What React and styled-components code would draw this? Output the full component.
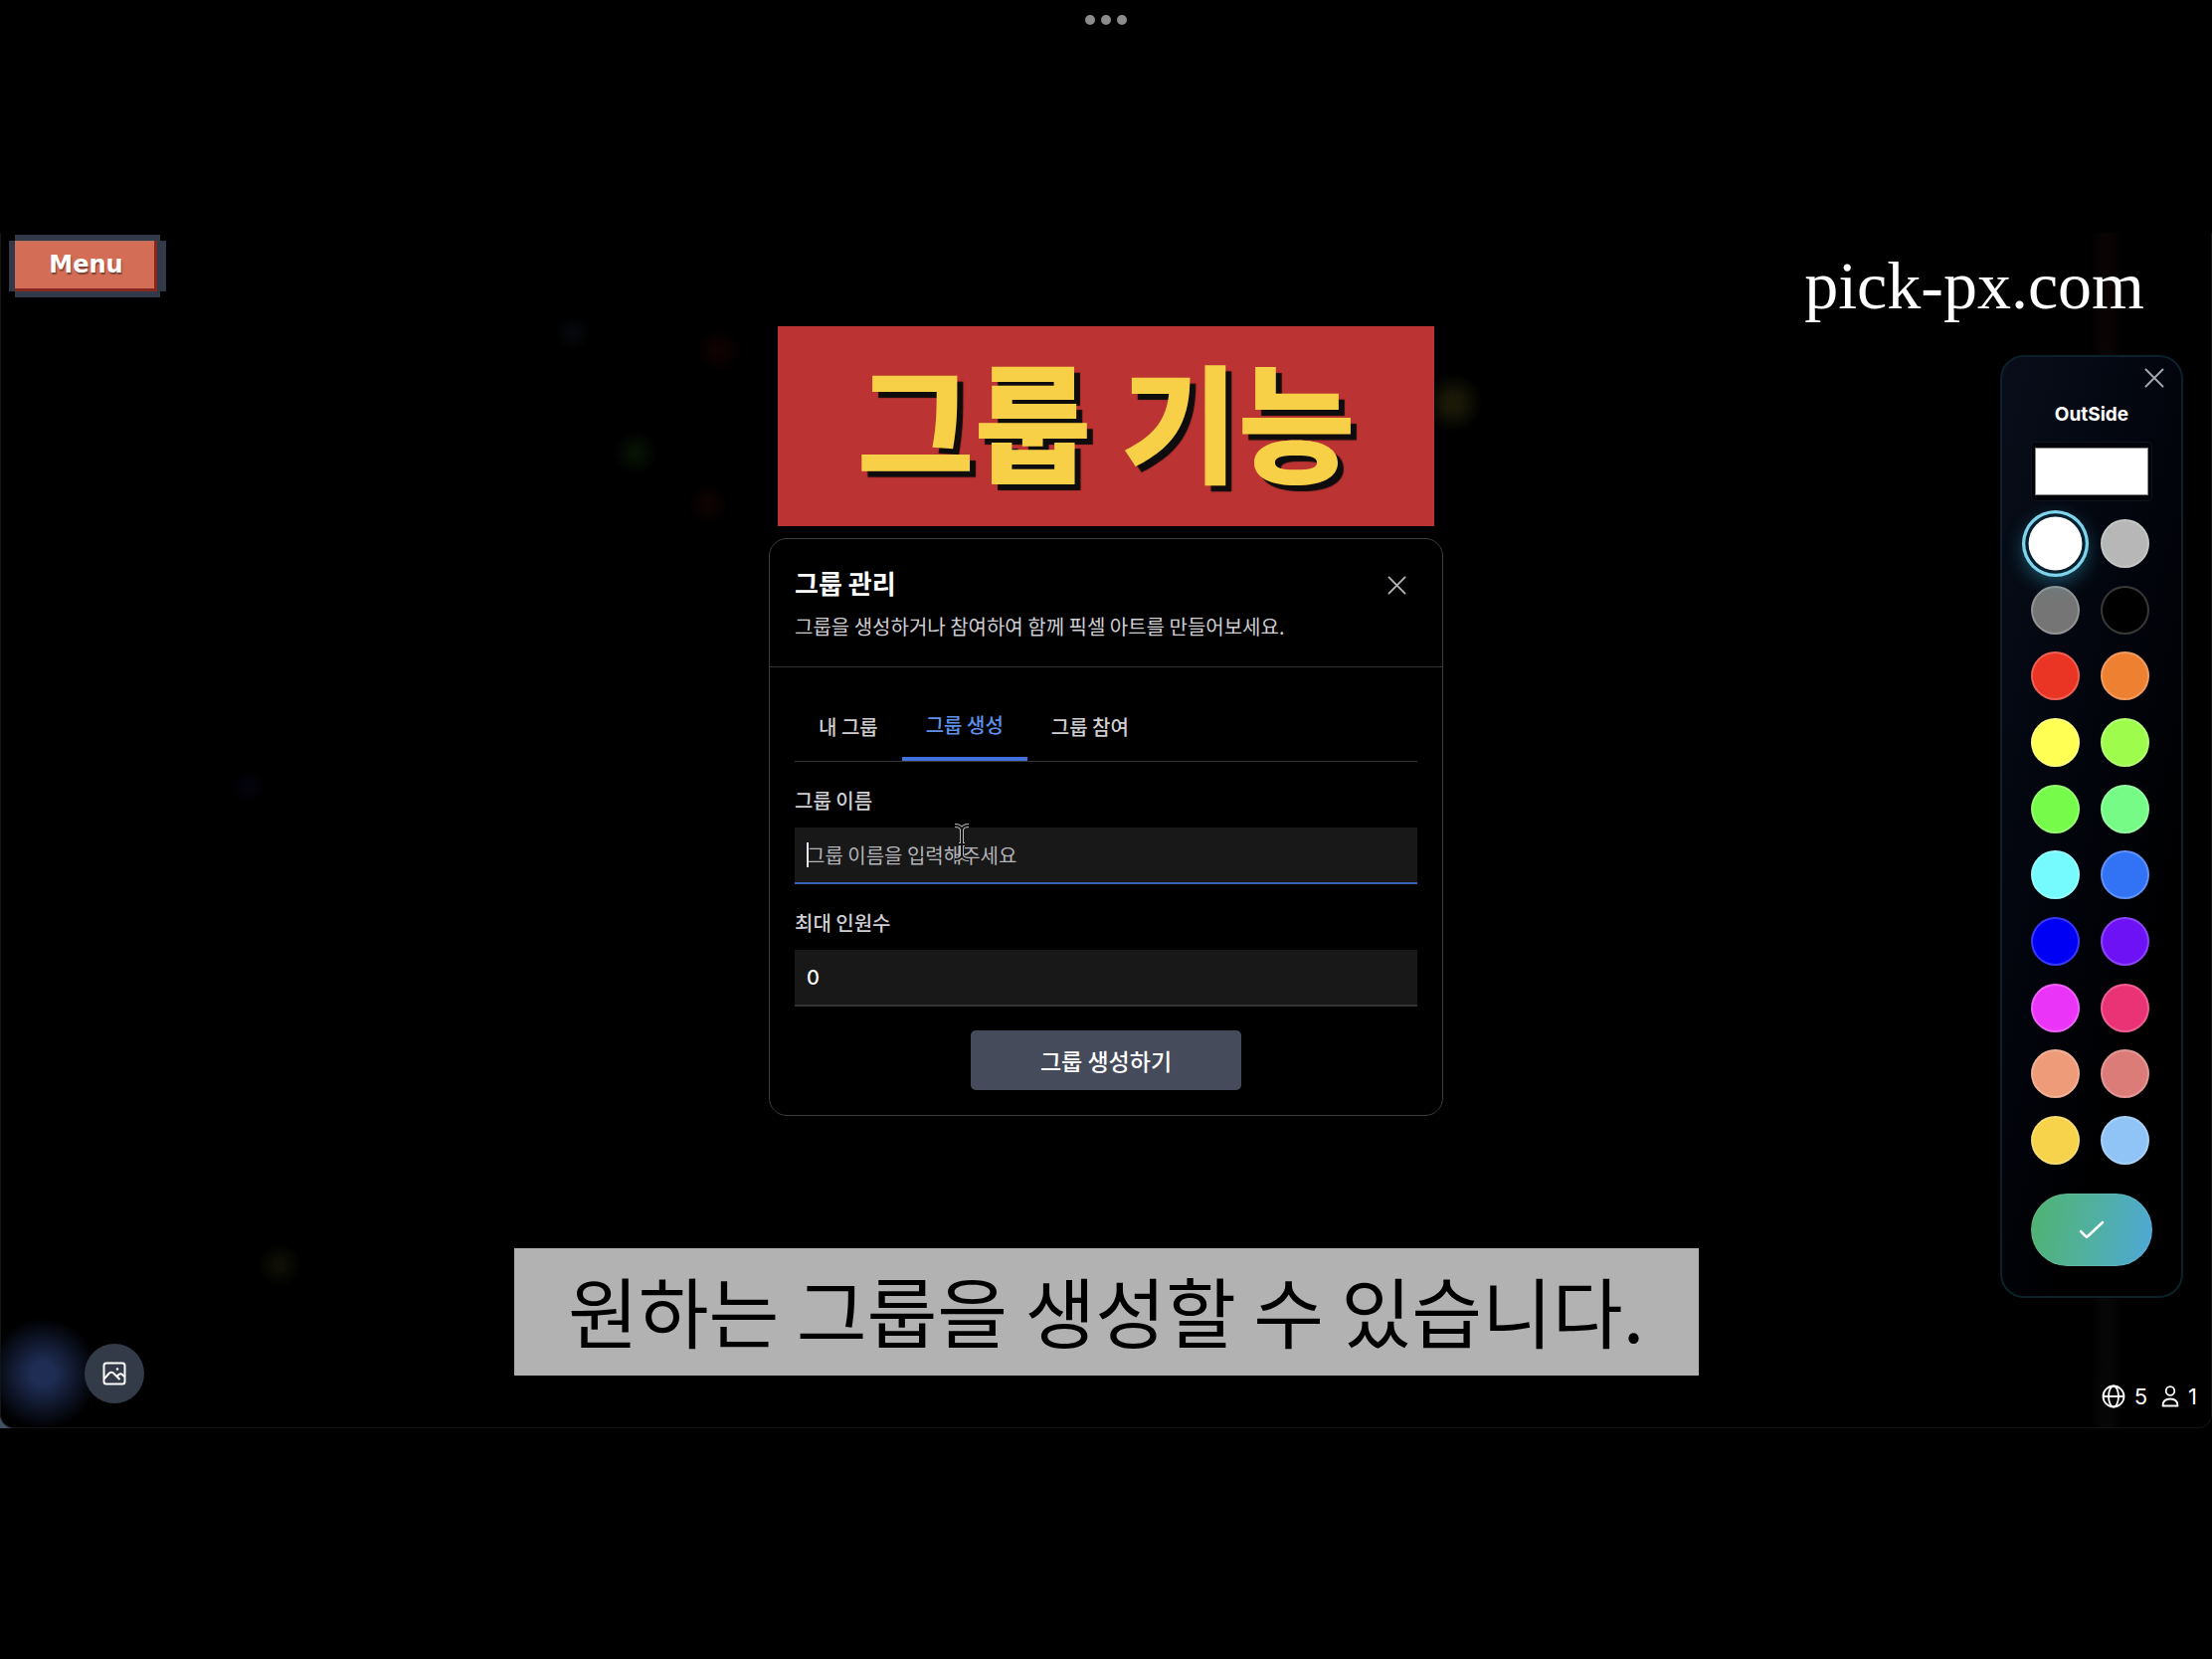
import React, { useState } from "react";
import styled, { createGlobalStyle } from "styled-components";

const GlobalStyle = createGlobalStyle`
  * { box-sizing: border-box; }
  body {
    margin: 0;
    background: #000;
    color: #fff;
    font-family: Inter, "Noto Sans CJK KR", sans-serif;
  }
  button, input { font-family: inherit; }
`;

const Page = styled.div`
  min-height: 100vh;
  display: flex;
  flex-direction: column;
`;

const TopBar = styled.header`
  height: 234px;
  padding-top: 15px;
  display: flex;
  justify-content: center;
  gap: 6px;
`;

const Dot = styled.span`
  width: 10px;
  height: 10px;
  border-radius: 50%;
  background: #8c8c8c;
`;

const Backdrop = styled.div`
  background: linear-gradient(to top, #405263 0, #405263 20px, transparent 20px) left / 20px 100% no-repeat;
`;

const Stage = styled.main`
  position: relative;
  isolation: isolate;
  overflow: hidden;
  display: grid;
  grid-template-columns: 1fr auto 1fr;
  background: #000;
  border: 1px solid #141414;
  border-top: 0;
  border-radius: 0 0 14px 14px;
`;

const Glow = styled.span`
  position: absolute;
  z-index: -1;
  left: ${(p) => p.$x}%;
  top: ${(p) => p.$y}%;
  width: ${(p) => p.$size}px;
  height: ${(p) => p.$size}px;
  transform: translate(-50%, -50%);
  border-radius: 50%;
  background: radial-gradient(circle, ${(p) => p.$color} 0%, ${(p) => p.$color} 15%, transparent 70%);
`;

const Streak = styled.span`
  position: absolute;
  z-index: -1;
  right: 4%;
  top: 0;
  bottom: 0;
  width: 32px;
  background: linear-gradient(90deg, #000, transparent 40%, transparent 60%, #000),
    linear-gradient(#0a0304, #080405 50%, #070707);
`;

const Column = styled.div`
  display: flex;
  flex-direction: column;
  align-items: ${(p) => p.$align};
`;

const LeftColumn = styled(Column)`
  justify-content: space-between;
  padding: 8px 8px 24px;
`;

const MenuButton = styled.button`
  margin: 0 6px;
  height: 48px;
  width: 143px;
  padding: 0;
  border: 0;
  background: #d46d55;
  box-shadow: inset -3px 0 #84271f, inset 0 1px #b5745f, 0 3px #84271f, 3px 0 #323a49, 3px -6px #323a49,
    0 -6px #323a49, 3px 9px #323a49, 0 9px #323a49, -6px 0 #323a49, 9px 3px #323a49, -6px 3px #323a49, 9px 0 #323a49;
  color: #fff;
  font: bold 24px/40px "DejaVu Sans", sans-serif;
  text-shadow: 1px 2px 1px #7d4338;
`;

const GalleryButton = styled.button`
  width: 60px;
  height: 60px;
  margin-left: 76px;
  padding: 0;
  display: grid;
  place-items: center;
  border: 0;
  border-radius: 50%;
  background: #333a48;
  color: #fff;
`;

const CenterColumn = styled(Column)`
  padding: 94px 0 52px;
`;

const Banner = styled.h1`
  width: 660px;
  margin: 0 0 12px;
  padding: 0 0 16px;
  background: #bb3332;
  color: #f7d047;
  font: 900 128px/185px "Noto Sans CJK KR", sans-serif;
  text-align: center;
  text-shadow: 6px 6px 1px #0e0c0c;
`;

const Dialog = styled.section`
  width: 678px;
  border: 1px solid #3c3c3c;
  border-radius: 18px;
  background: #000;
  font-family: "Noto Sans CJK KR", sans-serif;
`;

const DialogHead = styled.header`
  display: flex;
  justify-content: space-between;
  align-items: flex-start;
  padding: 26px 25px 24px;
  border-bottom: 1px solid #333;
`;

const DialogTitle = styled.h2`
  margin: 0 0 10px;
  font-size: 26px;
  line-height: 36px;
  font-weight: 700;
`;

const DialogText = styled.p`
  margin: 0;
  color: #cfcfd4;
  font-size: 20px;
  line-height: 32px;
`;

const CloseButton = styled.button`
  padding: 11px;
  display: grid;
  border: 0;
  background: none;
  color: #b4b4b8;
`;

const DialogBody = styled.div`
  padding: 24px 25px 25px;
`;

const Tabs = styled.div`
  display: flex;
  border-bottom: 1px solid #333;
`;

const Tab = styled.button`
  height: 70px;
  padding: 0 24px;
  border: 0;
  border-bottom: ${(p) => (p.$active ? "4px solid #4271dc" : "0")};
  background: none;
  color: ${(p) => (p.$active ? "#6190e8" : "#cfcfd2")};
  font-size: 20px;
  font-weight: 500;
`;

const Form = styled.form`
  display: flex;
  flex-direction: column;
`;

const Label = styled.label`
  margin: 24px 0 12px;
  color: #cfcfd4;
  font-size: 20px;
  line-height: 30px;
  font-weight: 500;
`;

const Field = styled.div`
  position: relative;
`;

const TextInput = styled.input`
  display: block;
  width: 100%;
  height: 57px;
  padding: 0 12px;
  border: 0;
  border-bottom: 2px solid ${(p) => (p.$active ? "#3a61b8" : "#343434")};
  border-radius: 0;
  outline: 0;
  background: #181818;
  color: #fff;
  font-size: 20px;
  appearance: textfield;
  &::placeholder { color: #b4b4b8; opacity: 1; }
`;

const NumberInput = styled(TextInput)`
  font-family: Inter, sans-serif;
  font-weight: 500;
`;

const Caret = styled.span`
  position: absolute;
  left: 12px;
  top: 15px;
  width: 2px;
  height: 25px;
  background: #e8e8e8;
`;

const Pointer = styled.svg`
  position: absolute;
  left: 159px;
  top: -5px;
`;

const SubmitButton = styled.button`
  align-self: center;
  width: 272px;
  height: 60px;
  margin-top: 24px;
  border: 0;
  border-radius: 5px;
  background: #454b5a;
  color: #fff;
  font-size: 23px;
  font-weight: 500;
`;

const Caption = styled.p`
  width: 1191px;
  margin: 133px 0 0;
  padding-bottom: 4px;
  background: #b2b2b2;
  color: #000;
  font: 400 77px/124px "Noto Sans CJK KR", sans-serif;
  text-align: center;
`;

const RightColumn = styled(Column)`
  padding-right: 28px;
`;

const Site = styled.a`
  margin: 14px 39px 0 0;
  color: #fff;
  font: 68px/78px "Liberation Serif", serif;
  text-decoration: none;
`;

const Palette = styled.aside`
  width: 184px;
  margin-top: 31px;
  padding: 11px 29px 30px;
  display: flex;
  flex-direction: column;
  align-items: center;
  border: 2px solid #0b222b;
  border-radius: 24px;
  background: linear-gradient(105deg, #080e1a 0%, #02040c 45%, #000 75%);
`;

const PaletteClose = styled.button`
  align-self: flex-end;
  margin-right: -12px;
  padding: 0;
  display: grid;
  border: 0;
  background: none;
  color: #a2a5ad;
`;

const PaletteTitle = styled.h2`
  margin: 15px 0;
  font-size: 19px;
  line-height: 24px;
  font-weight: 700;
`;

const CurrentColor = styled.input`
  width: 122px;
  height: 60px;
  padding: 5px 3px;
  border: 1px solid #0f131c;
  border-radius: 4px;
  background: #02040a;
  appearance: none;
  &::-webkit-color-swatch-wrapper { padding: 0; }
  &::-webkit-color-swatch { border: 1px solid #888; border-radius: 0; }
`;

const Swatches = styled.div`
  align-self: flex-start;
  height: 649px;
  margin-top: 18px;
  display: grid;
  grid-template-columns: 49px 49px;
  column-gap: 21px;
  align-content: space-between;
`;

const Swatch = styled.input`
  width: 49px;
  height: 49px;
  margin: 0;
  appearance: none;
  border: 2px solid rgba(255, 255, 255, 0.22);
  border-radius: 50%;
  background: ${(p) => p.$color};
  background-origin: border-box;
  &:checked {
    border: 0;
    transform: scale(1.1);
    box-shadow: 0 0 0 3px #06202e, 0 0 0 6px #7ed4ec, 0 6px 18px 4px rgba(60, 190, 225, 0.45);
  }
`;

const ConfirmButton = styled.button`
  width: 122px;
  height: 73px;
  margin-top: 29px;
  padding: 0;
  display: grid;
  place-items: center;
  border: 1px solid rgba(255, 255, 255, 0.1);
  border-radius: 37px;
  background: linear-gradient(100deg, #50b274 5%, #50b0a0 50%, #4ea8d6 98%) border-box;
  color: #fff;
`;

const Stats = styled.div`
  margin: auto -14px 18px 0;
  display: flex;
  gap: 14px;
  font-size: 22px;
  line-height: 26px;
`;

const Stat = styled.span`
  display: flex;
  align-items: center;
  gap: 9px;
`;

const COLORS = [
  ["흰색", "#ffffff"], ["밝은 회색", "#b7b7b7"],
  ["회색", "#757575"], ["검정", "#000000"],
  ["빨강", "#ea3424"], ["주황", "#ee8031"],
  ["노랑", "#ffff54"], ["연두", "#9efd4c"],
  ["초록", "#76fb4a"], ["민트", "#76fc86"],
  ["하늘", "#75fbfd"], ["파랑", "#3272f5"],
  ["진파랑", "#0000f5"], ["보라", "#6c12f5"],
  ["자홍", "#ea34f7"], ["분홍", "#ea3375"],
  ["살구", "#ee9b7a"], ["장미", "#dc7c79"],
  ["금색", "#f6d34a"], ["연하늘", "#90c4f7"],
];

const GLOWS = [
  [1.9, 95.5, 112, "#1f2d54"],
  [25.9, 8.4, 36, "#05070b"],
  [32.5, 9.8, 46, "#0e0202"],
  [28.7, 18.4, 46, "#071004"],
  [32.0, 22.7, 42, "#0e0202"],
  [65.7, 14.2, 60, "#1a1908"],
  [11.2, 46.4, 38, "#03030b"],
  [12.6, 86.4, 44, "#0e0e04"],
];

const TABS = ["내 그룹", "그룹 생성", "그룹 참여"];

function Cross({ size, width }) {
  return (
    <svg width={size} height={size} viewBox="0 0 20 20" fill="none" stroke="currentColor" strokeWidth={width} strokeLinecap="round" aria-hidden="true">
      <path d="M1.5 1.5l17 17M18.5 1.5l-17 17" />
    </svg>
  );
}

function PictureIcon() {
  return (
    <svg width="24" height="24" viewBox="0 0 24 24" fill="none" stroke="currentColor" strokeWidth="2" strokeLinejoin="round" aria-hidden="true">
      <rect x="1.5" y="1.5" width="21" height="21" rx="2.5" />
      <path d="M2 17l5-5.500q2-1.500 4 0l6.500 6.500M14.500 15l2-2q2-1.500 3.500 0l2 2" />
      <circle cx="15" cy="7.500" r="1.300" fill="currentColor" stroke="none" />
    </svg>
  );
}

function GlobeIcon() {
  return (
    <svg width="24" height="24" viewBox="0 0 24 24" fill="none" stroke="currentColor" strokeWidth="1.800" aria-hidden="true">
      <circle cx="12" cy="12" r="10.500" />
      <ellipse cx="12" cy="12" rx="5" ry="10.500" />
      <path d="M1.500 12h21" />
    </svg>
  );
}

function PersonIcon() {
  return (
    <svg width="18" height="22" viewBox="0 0 18 22" fill="none" stroke="currentColor" strokeWidth="1.800" strokeLinejoin="round" aria-hidden="true">
      <circle cx="9" cy="5.500" r="4.300" />
      <path d="M1.500 20.500c0-4.500 3-7 7.500-7s7.500 2.500 7.500 7z" />
    </svg>
  );
}

export default function App() {
  const [tab, setTab] = useState(1);
  const [color, setColor] = useState("#ffffff");
  const [name, setName] = useState("");
  const [limit, setLimit] = useState(0);

  return (
    <Page>
      <GlobalStyle />
      <TopBar>
        <Dot />
        <Dot />
        <Dot />
      </TopBar>
      <Backdrop>
        <Stage>
          {GLOWS.map(([x, y, size, tone]) => (
            <Glow key={`${x}-${y}`} $x={x} $y={y} $size={size} $color={tone} />
          ))}
          <Streak />

          <LeftColumn $align="flex-start">
            <MenuButton type="button">Menu</MenuButton>
            <GalleryButton type="button" aria-label="갤러리">
              <PictureIcon />
            </GalleryButton>
          </LeftColumn>

          <CenterColumn $align="center">
            <Banner>그룹 기능</Banner>
            <Dialog role="dialog" aria-labelledby="dialog-title">
              <DialogHead>
                <div>
                  <DialogTitle id="dialog-title">그룹 관리</DialogTitle>
                  <DialogText>그룹을 생성하거나 참여하여 함께 픽셀 아트를 만들어보세요.</DialogText>
                </div>
                <CloseButton type="button" aria-label="닫기">
                  <Cross size={19} width={2} />
                </CloseButton>
              </DialogHead>
              <DialogBody>
                <Tabs role="tablist">
                  {TABS.map((text, i) => (
                    <Tab key={text} type="button" role="tab" aria-selected={tab === i} $active={tab === i} onClick={() => setTab(i)}>
                      {text}
                    </Tab>
                  ))}
                </Tabs>
                <Form onSubmit={(e) => e.preventDefault()}>
                  <Label htmlFor="group-name">그룹 이름</Label>
                  <Field>
                    <TextInput id="group-name" type="text" placeholder="그룹 이름을 입력해주세요" $active value={name} onChange={(e) => setName(e.target.value)} />
                    <Caret />
                    <Pointer width="18" height="44" viewBox="0 0 18 44" fill="none" aria-hidden="true">
                      <path d="M2 3q6 0 7 4q1-4 7-4M9 7v26M2 37q6 0 7-4q1 4 7 4M6 22h6" stroke="#b5b5b5" strokeWidth="4" />
                      <path d="M2 3q6 0 7 4q1-4 7-4M9 7v26M2 37q6 0 7-4q1 4 7 4M6 22h6" stroke="#111" strokeWidth="2" />
                    </Pointer>
                  </Field>
                  <Label htmlFor="group-limit">최대 인원수</Label>
                  <NumberInput id="group-limit" type="number" value={limit} onChange={(e) => setLimit(e.target.value)} />
                  <SubmitButton type="submit">그룹 생성하기</SubmitButton>
                </Form>
              </DialogBody>
            </Dialog>
            <Caption>원하는 그룹을 생성할 수 있습니다.</Caption>
          </CenterColumn>

          <RightColumn $align="flex-end">
            <Site href="#">pick-px.com</Site>
            <Palette>
              <PaletteClose type="button" aria-label="팔레트 닫기">
                <Cross size={20} width={2} />
              </PaletteClose>
              <PaletteTitle>OutSide</PaletteTitle>
              <CurrentColor type="color" aria-label="현재 색상" value={color} onChange={(e) => setColor(e.target.value)} />
              <Swatches role="radiogroup" aria-label="색상">
                {COLORS.map(([label, value]) => (
                  <Swatch key={value} type="radio" name="color" aria-label={label} $color={value} checked={color === value} onChange={() => setColor(value)} />
                ))}
              </Swatches>
              <ConfirmButton type="button" aria-label="확인">
                <svg width="26" height="20" viewBox="0 0 26 20" fill="none" stroke="currentColor" strokeWidth="2.500" strokeLinecap="round" strokeLinejoin="round" aria-hidden="true">
                  <path d="M2 11l6 6L24 2" />
                </svg>
              </ConfirmButton>
            </Palette>
            <Stats>
              <Stat>
                <GlobeIcon />5
              </Stat>
              <Stat>
                <PersonIcon />1
              </Stat>
            </Stats>
          </RightColumn>
        </Stage>
      </Backdrop>
    </Page>
  );
}
